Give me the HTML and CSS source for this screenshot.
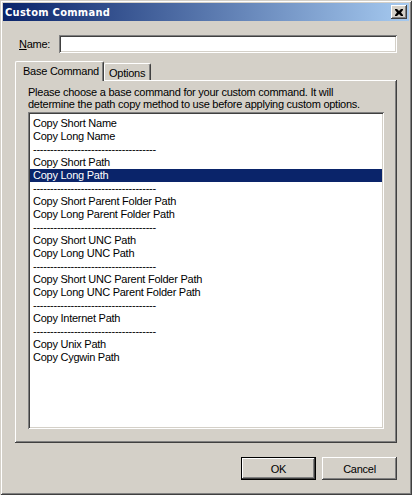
FILE: index.html
```html
<!DOCTYPE html>
<html>
<head>
<meta charset="utf-8">
<link rel="stylesheet" href="styles.css">
</head>
<body>
<div class="window">
  <div class="titlebar">
    <span class="title">Custom Command</span>
    <span class="close">
      <svg width="8" height="7" viewBox="0 0 8 7"><path d="M0 0h2l2 2 2-2h2v1L6 3.5 8 6v1H6L4 5 2 7H0V6l2-2.5L0 1z" fill="#000"/></svg>
    </span>
  </div>
  <div class="content">
    <div class="name-row">
      <label class="name-label"><u>N</u>ame:</label>
      <div class="input"></div>
    </div>
    <div class="tabs">
      <div class="tab tab-active">Base Command</div>
      <div class="tab tab-inactive">Options</div>
    </div>
    <div class="panel">
      <div class="desc">Please choose a base command for your custom command. It will<br>determine the path copy method to use before applying custom options.</div>
      <div class="listbox">
        <div class="item">Copy Short Name</div>
        <div class="item">Copy Long Name</div>
        <div class="item">------------------------------------</div>
        <div class="item">Copy Short Path</div>
        <div class="item selected">Copy Long Path</div>
        <div class="item">------------------------------------</div>
        <div class="item">Copy Short Parent Folder Path</div>
        <div class="item">Copy Long Parent Folder Path</div>
        <div class="item">------------------------------------</div>
        <div class="item">Copy Short UNC Path</div>
        <div class="item">Copy Long UNC Path</div>
        <div class="item">------------------------------------</div>
        <div class="item">Copy Short UNC Parent Folder Path</div>
        <div class="item">Copy Long UNC Parent Folder Path</div>
        <div class="item">------------------------------------</div>
        <div class="item">Copy Internet Path</div>
        <div class="item">------------------------------------</div>
        <div class="item">Copy Unix Path</div>
        <div class="item">Copy Cygwin Path</div>
      </div>
    </div>
    <div class="buttons">
      <div class="btn btn-default"><span>OK</span></div>
      <div class="btn">Cancel</div>
    </div>
  </div>
</div>
</body>
</html>
```

FILE: styles.css
```css
* { box-sizing: border-box; }
html, body { margin: 0; padding: 0; background: #d4d0c8; }
body {
  font-family: "Liberation Sans", Arial, sans-serif;
  font-size: 11px;
  letter-spacing: -0.25px;
  color: #000;
}
.window {
  width: 412px;
  height: 495px;
  background: #d4d0c8;
  padding: 3px;
  box-shadow: inset 1px 1px #d4d0c8, inset -1px -1px #404040, inset 2px 2px #ffffff, inset -2px -2px #808080;
}
.titlebar {
  height: 18px;
  background: linear-gradient(to right, #0a246a, #a6caf0);
  display: flex;
  align-items: center;
  justify-content: space-between;
  padding: 0 2px 0 2px;
}
.title {
  color: #fff;
  font-family: "DejaVu Sans Condensed", "DejaVu Sans", sans-serif;
  font-stretch: condensed;
  font-weight: bold;
  font-size: 11px;
  letter-spacing: 0.3px;
}
.close {
  width: 16px;
  height: 14px;
  background: #d4d0c8;
  display: flex;
  align-items: center;
  justify-content: center;
  box-shadow: inset -1px -1px #404040, inset 1px 1px #ffffff, inset -2px -2px #808080;
}
.close svg { display: block; margin-left: -1px; }
.content {
  padding: 14px 12px 0 12px;
}
.name-row {
  display: flex;
  align-items: center;
  padding-left: 4px;
  height: 18px;
}
.name-label { width: 40px; }
.input {
  flex: 1;
  height: 18px;
  background: #fff;
  box-shadow: inset 1px 1px #808080, inset -1px -1px #ffffff, inset 2px 2px #404040, inset -2px -2px #d4d0c8;
}
.tabs {
  display: flex;
  align-items: flex-end;
  margin-top: 8px;
  height: 19px;
}
.tab {
  background: #d4d0c8;
  border: 1px solid;
  border-color: #ffffff #404040 transparent #ffffff;
  border-bottom: none;
  border-radius: 2px 2px 0 0;
  box-shadow: inset -1px 0 #808080;
  line-height: 15px;
  white-space: nowrap;
}
.tab-active {
  position: relative;
  z-index: 1;
  width: 89px;
  height: 20px;
  margin-bottom: -1px;
  padding: 2px 0 0 7px;
}
.tab-inactive {
  width: 47px;
  height: 17px;
  padding: 2px 0 0 4px;
}
.panel {
  height: 363px;
  padding: 6px 13px 0 13px;
  box-shadow: inset -1px -1px #404040, inset 1px 1px #ffffff, inset -2px -2px #808080;
}
.desc {
  line-height: 12px;
  white-space: nowrap;
}
.listbox {
  width: 356px;
  height: 317px;
  margin-top: 2px;
  background: #fff;
  padding: 5px 2px 0 2px;
  box-shadow: inset 1px 1px #808080, inset -1px -1px #ffffff, inset 2px 2px #404040, inset -2px -2px #d4d0c8;
}
.item {
  height: 13px;
  line-height: 13px;
  padding-left: 3px;
  white-space: nowrap;
  overflow: hidden;
}
.item.selected {
  background: #0a246a;
  color: #fff;
}
.buttons {
  display: flex;
  justify-content: flex-end;
  gap: 6px;
  margin-top: 14px;
}
.btn {
  width: 75px;
  height: 23px;
  display: flex;
  align-items: center;
  justify-content: center;
  background: #d4d0c8;
  box-shadow: inset -1px -1px #404040, inset 1px 1px #ffffff, inset -2px -2px #808080;
}
.btn-default {
  border: 1px solid #000;
}
```
